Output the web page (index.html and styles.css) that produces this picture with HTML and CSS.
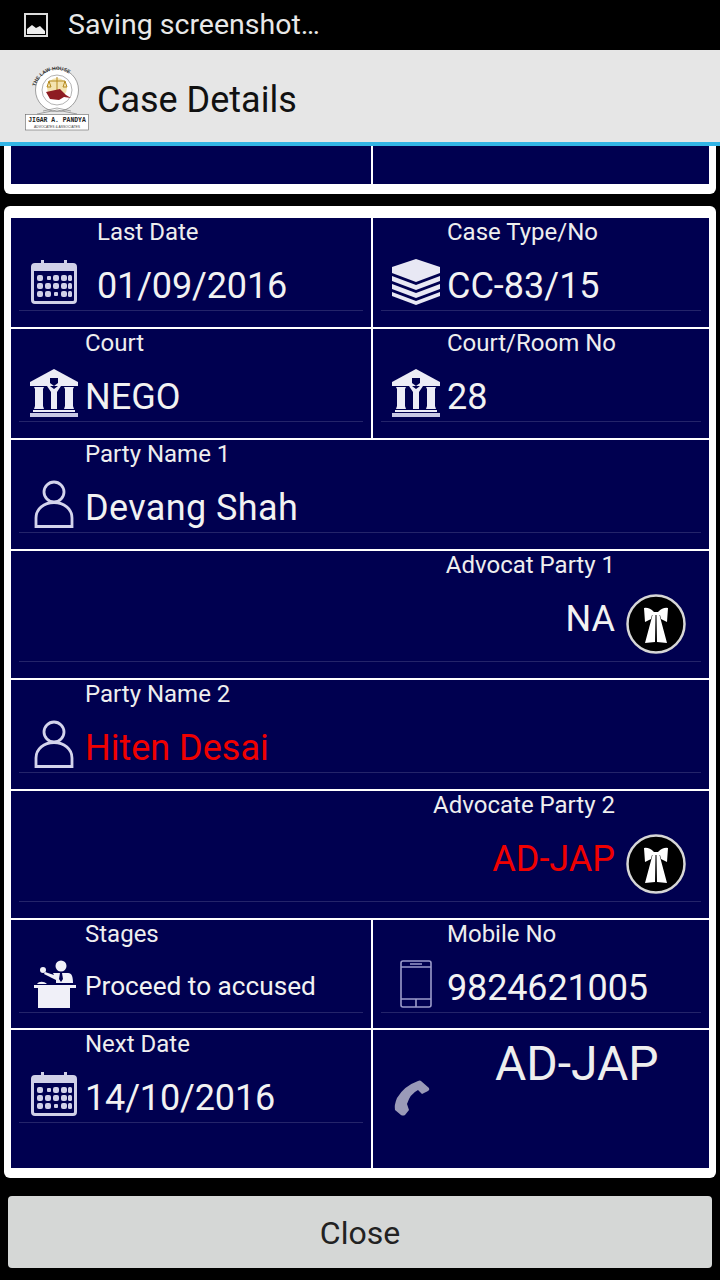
FILE: index.html
```html
<!DOCTYPE html>
<html lang="en">
<head>
<meta charset="utf-8">
<title>Case Details</title>
<link rel="stylesheet" href="styles.css">
</head>
<body>
<svg class="defs" aria-hidden="true">
  <symbol id="i-cal" viewBox="0 0 48 48">
    <path fill="#d0d0e8" d="M5 5h6V2h3v3h20V2h3v3h6a4 4 0 0 1 4 4v33a4 4 0 0 1-4 4H5a4 4 0 0 1-4-4V9a4 4 0 0 1 4-4zm-1 8v29a1 1 0 0 0 1 1h38a1 1 0 0 0 1-1V13z"/>
    <g fill="#d0d0e8">
      <rect x="7" y="17" width="6" height="6" rx="2"/><rect x="17" y="18" width="4" height="4" rx="1"/><rect x="23" y="17" width="6" height="6" rx="2"/><rect x="31" y="17" width="6" height="6" rx="2"/><rect x="38" y="17" width="4" height="6" rx="1.500"/>
      <rect x="7" y="25" width="6" height="6" rx="2"/><rect x="15" y="25" width="6" height="6" rx="2"/><rect x="23" y="25" width="6" height="6" rx="2"/><rect x="31" y="25" width="6" height="6" rx="2"/><rect x="38" y="25" width="4" height="6" rx="1.500"/>
      <rect x="7" y="33" width="6" height="6" rx="2"/><rect x="15" y="33" width="6" height="6" rx="2"/><rect x="24" y="34" width="4" height="4" rx="1"/><rect x="31" y="33" width="6" height="6" rx="2"/><rect x="38" y="33" width="4" height="6" rx="1.500"/>
    </g>
  </symbol>
  <symbol id="i-stack" viewBox="0 0 48 48">
    <path fill="#e8e8f4" d="M24 1l24 8v6L24 24 0 15V9z"/>
    <path fill="#e8e8f4" d="M0 18l24 9 24-9v5L24 32 0 23zM0 26l24 9 24-9v5L24 40 0 31zM0 34l24 9 24-9v4L24 47 0 38z"/>
  </symbol>
  <symbol id="i-bank" viewBox="0 0 48 48">
    <path fill="#ececf6" d="M24 0L48 13v4H0v-4z"/>
    <path fill="#000050" d="M20 9h8v5l-4 3-4-3z"/>
    <path fill="#ececf6" d="M4 18h10l-1 2v17l1 3H4l1-3V20zM34 18h10l-1 2v17l1 3H34l1-3V20zM17 17h3l4 3 4-3h3l-4 6v17h-6V23z"/>
    <path fill="#ececf6" d="M3 41h42v2H3z"/>
    <path fill="#c8c8e4" d="M0 44h48v4H0z"/>
  </symbol>
  <symbol id="i-user" viewBox="0 0 40 48">
    <g fill="none" stroke="#d4d4ec" stroke-width="2.800">
      <circle cx="20" cy="12" r="10"/>
      <path d="M2 46.500V38c0-9 8-15.500 18-15.500S38 29 38 38v8.500z"/>
    </g>
  </symbol>
  <symbol id="i-robe" viewBox="0 0 60 60">
    <circle cx="30" cy="30" r="28.500" fill="#000" stroke="#d6d6d6" stroke-width="2.500"/>
    <path fill="#fff" d="M18 14q5-1 10 4h4q5-5 10-4l-1 14-6-3-1-4h-8l-1 4-6 3z"/>
    <path fill="#fff" d="M26.500 21h3l-.5 27-10 1zM30.500 21h3l7.500 28-10-1z"/>
  </symbol>
  <symbol id="i-speaker" viewBox="0 0 44 48">
    <g fill="#f0f0f8">
      <circle cx="29" cy="6" r="5.500"/>
      <path d="M21 13h15c4 0 5 4 5 10H24v-3l-12-6 1-2 9 3z"/>
      <circle cx="11" cy="10" r="3"/>
      <path d="M2 25h42v3H2zM6 28h32v20H6zM5 24c2-3 7-3 10 0z"/>
    </g>
    <path fill="#000050" d="M28 13h2l1 6-2 3-2-3z"/>
  </symbol>
  <symbol id="i-tablet" viewBox="0 0 32 48">
    <g fill="none" stroke="#9c9ccb" stroke-width="1.600">
      <rect x="1" y="1" width="30" height="46" rx="2"/>
      <path d="M1 7h30M1 39h30M16 39v8M10 4h12"/>
    </g>
  </symbol>
  <symbol id="i-phone" viewBox="0 0 38 38">
    <path fill="#9a9ab8" d="M27 1l8 7q1 2-1 3l-6 3-4-4q-8 4-11 14l2 6-4 5q-2 1-4 0l-6-5q-1-5 2-12Q10 6 24 1q2-1 3 0z"/>
  </symbol>
</svg>

<header class="status">
  <svg class="status-icon" viewBox="0 0 24 24"><path fill="none" stroke="#ddd" stroke-width="2" d="M1 1h22v22H1z"/><path fill="#eee" d="M3 21v-5l5-4 4 3 4-2 5 5v3z"/></svg>
  <span class="status-text">Saving screenshot…</span>
</header>

<div class="bar">
  <svg class="logo" viewBox="0 0 64 66">
    <defs><path id="arc" d="M10 27a22 22 0 0 1 44 0"/></defs>
    <circle cx="32" cy="25" r="21.500" fill="#fff" stroke="#666" stroke-width=".6"/>
    <circle cx="32" cy="25" r="15" fill="#fff" stroke="#666" stroke-width=".5"/>
    <circle cx="32" cy="23" r="10" fill="#f3e3b0"/>
    <text class="logo-arc"><textPath href="#arc" startOffset="8%">THE LAW HOUSE</textPath></text>
    <path fill="none" stroke="#b58a1e" stroke-width="1" d="M32 12v14M24 16h16M22 22l2-6 2 6zM38 22l2-6 2 6z"/>
    <path fill="#8e1c22" d="M21 27l14-3 6 6 5 3-7-1-5 3-9-1z"/>
    <path fill="none" stroke="#555" stroke-width=".5" d="M18 46l14-3 14 3M12 49l20-4 20 4"/>
    <rect x=".5" y="49.500" width="63" height="15.500" fill="#fff" stroke="#666" stroke-width=".6"/>
    <text class="logo-name" x="32" y="57" text-anchor="middle">JIGAR A. PANDYA</text>
    <text class="logo-sub" x="32" y="63" text-anchor="middle">ADVOCATES &amp; ASSOCIATES</text>
  </svg>
  <h1 class="title">Case Details</h1>
</div>

<main class="content">
  <section class="card card-clipped">
    <div class="grid">
      <div class="cell cell-stub"></div>
      <div class="cell cell-stub"></div>
    </div>
  </section>

  <section class="card">
    <div class="grid">
      <div class="cell row-std">
        <div class="label label-far">Last Date</div>
        <div class="field">
          <span class="icon-box icon-box-far"><svg class="icon"><use href="#i-cal"/></svg></span>
          <span class="value value-digits">01/09/2016</span>
        </div>
      </div>
      <div class="cell row-std">
        <div class="label">Case Type/No</div>
        <div class="field">
          <span class="icon-box"><svg class="icon"><use href="#i-stack"/></svg></span>
          <span class="value">CC-83/15</span>
        </div>
      </div>

      <div class="cell row-std">
        <div class="label">Court</div>
        <div class="field">
          <span class="icon-box"><svg class="icon"><use href="#i-bank"/></svg></span>
          <span class="value">NEGO</span>
        </div>
      </div>
      <div class="cell row-std">
        <div class="label">Court/Room No</div>
        <div class="field">
          <span class="icon-box"><svg class="icon"><use href="#i-bank"/></svg></span>
          <span class="value">28</span>
        </div>
      </div>

      <div class="cell cell-wide row-std">
        <div class="label">Party Name 1</div>
        <div class="field">
          <span class="icon-box"><svg class="icon icon-user"><use href="#i-user"/></svg></span>
          <span class="value value-name">Devang Shah</span>
        </div>
      </div>

      <div class="cell cell-wide row-tall">
        <div class="label label-end">Advocat Party 1</div>
        <div class="field field-end">
          <span class="value value-end">NA</span>
          <svg class="robe"><use href="#i-robe"/></svg>
        </div>
      </div>

      <div class="cell cell-wide row-std">
        <div class="label">Party Name 2</div>
        <div class="field">
          <span class="icon-box"><svg class="icon icon-user"><use href="#i-user"/></svg></span>
          <span class="value value-red">Hiten Desai</span>
        </div>
      </div>

      <div class="cell cell-wide row-tall">
        <div class="label label-end">Advocate Party 2</div>
        <div class="field field-end">
          <span class="value value-end value-red">AD-JAP</span>
          <svg class="robe"><use href="#i-robe"/></svg>
        </div>
      </div>

      <div class="cell row-short">
        <div class="label">Stages</div>
        <div class="field">
          <span class="icon-box"><svg class="icon icon-speaker"><use href="#i-speaker"/></svg></span>
          <span class="value value-small">Proceed to accused</span>
        </div>
      </div>
      <div class="cell row-short">
        <div class="label">Mobile No</div>
        <div class="field">
          <span class="icon-box"><svg class="icon icon-tablet"><use href="#i-tablet"/></svg></span>
          <span class="value value-digits">9824621005</span>
        </div>
      </div>

      <div class="cell row-last">
        <div class="label">Next Date</div>
        <div class="field">
          <span class="icon-box"><svg class="icon"><use href="#i-cal"/></svg></span>
          <span class="value value-digits">14/10/2016</span>
        </div>
      </div>
      <div class="cell row-last cell-call">
        <svg class="phone"><use href="#i-phone"/></svg>
        <span class="call-name">AD-JAP</span>
      </div>
    </div>
  </section>
</main>

<div class="footer">
  <button class="close" type="button">Close</button>
</div>
</body>
</html>
```

FILE: styles.css
```css
* {
  box-sizing: border-box;
}

html,
body {
  margin: 0;
  height: 1280px;
  overflow: hidden;
  background: #000;
  font-family: Roboto, "Liberation Sans", sans-serif;
}

.defs {
  display: block;
  width: 0;
  height: 0;
}

.status {
  height: 50px;
  display: flex;
  align-items: center;
  padding-left: 24px;
  color: #e8e8e8;
}

.status-icon {
  width: 24px;
  height: 24px;
  margin-right: 20px;
}

.status-text {
  font-size: 28.500px;
  line-height: 32px;
  margin-bottom: 1px;
}

.bar {
  height: 96px;
  display: flex;
  align-items: center;
  padding: 4px 0 0 25px;
  background: #e6e6e6;
  border-bottom: 4px solid #33b5e5;
}

.logo {
  width: 64px;
  height: 66px;
  margin-right: 8px;
  flex: none;
}

.logo-arc {
  font: 700 5px "Liberation Sans", sans-serif;
  fill: #333;
}

.logo-name {
  font: 700 6.400px "Liberation Mono", monospace;
  fill: #222;
}

.logo-sub {
  font: 3.400px "Liberation Sans", sans-serif;
  fill: #444;
}

.title {
  margin: 4px 0 0;
  font-size: 36px;
  font-weight: 400;
  color: #111;
}

.content {
  padding: 0 4px;
}

.card {
  background: #fff;
  border-radius: 6px;
  padding: 12px 7px 10px;
  margin-bottom: 12px;
}

.card-clipped {
  padding-top: 0;
  border-radius: 0 0 6px 6px;
}

.grid {
  display: grid;
  grid-template-columns: 360px 336px;
  column-gap: 2px;
  row-gap: 2px;
}

.cell {
  background: #000050;
  padding: 0 8px;
  color: #eee;
}

.cell-wide {
  grid-column: 1 / -1;
}

.cell-stub {
  height: 38px;
}

.row-std {
  height: 109px;
}

.row-tall {
  height: 127px;
}

.row-short {
  height: 108px;
}

.row-last {
  height: 138px;
}

.label {
  height: 28px;
  padding-left: 66px;
  font-size: 24px;
  line-height: 28px;
}

.label-far {
  padding-left: 78px;
}

.label-end {
  padding-left: 0;
  padding-right: 86px;
  text-align: right;
}

.field {
  display: flex;
  align-items: flex-end;
  height: 65px;
  padding-bottom: 3px;
  border-bottom: 1px solid #24246a;
}

.field-end {
  justify-content: flex-end;
  align-items: center;
  height: 83px;
  padding: 8px 15px 0 0;
}

.icon-box {
  display: flex;
  flex: none;
  width: 66px;
  padding-left: 11px;
  padding-bottom: 1px;
}

.icon-box-far {
  width: 78px;
}

.icon {
  display: block;
  width: 48px;
  height: 48px;
}

.icon-user {
  width: 40px;
  margin-left: 4px;
}

.icon-tablet {
  width: 32px;
  margin-left: 8px;
}

.icon-speaker {
  width: 44px;
  margin-left: 2px;
}

.value {
  font-size: 36px;
  line-height: 42px;
  color: #f2f2f2;
}

.value-digits {
  letter-spacing: -0.15px;
}

.value-name {
  letter-spacing: 0.4px;
}

.value-small {
  margin-bottom: 2px;
  font-size: 26.200px;
}

.value-end {
  margin-bottom: 10px;
}

.value-red {
  color: #f00000;
}

.robe {
  width: 60px;
  height: 60px;
  margin-left: 11px;
}

.cell-call {
  display: flex;
  align-items: flex-start;
  padding-left: 21px;
}

.phone {
  flex: none;
  width: 38px;
  height: 38px;
  margin-top: 50px;
}

.call-name {
  margin-left: 63px;
  padding-top: 7px;
  font-size: 48px;
  line-height: 54px;
}

.footer {
  padding: 6px 8px 0;
}

.close {
  display: block;
  width: 100%;
  height: 72px;
  border: 0;
  border-radius: 4px;
  padding-top: 2px;
  background: #d5d7d6;
  font-family: inherit;
  font-size: 32px;
  color: #222;
}
```
